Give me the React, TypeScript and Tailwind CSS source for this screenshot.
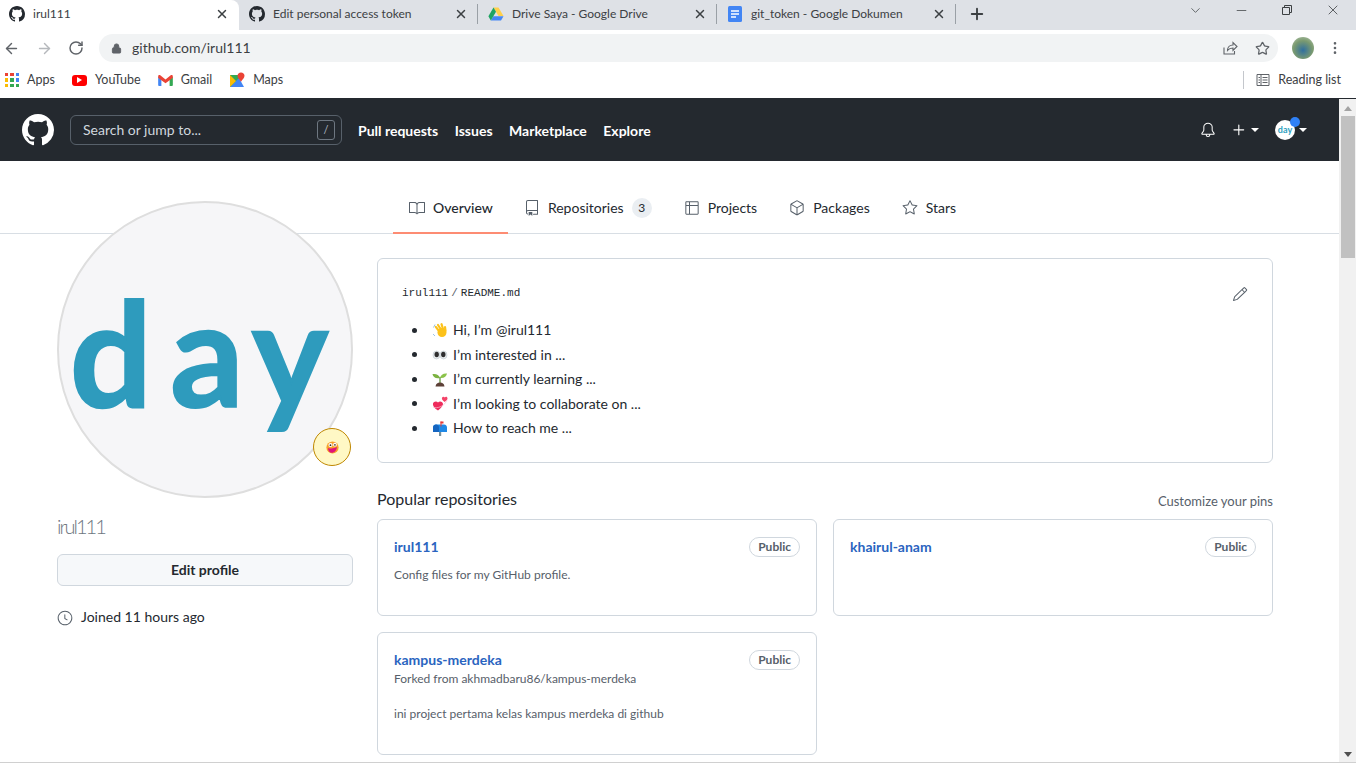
import { GoBook, GoRepo, GoTable, GoPackage, GoStar, GoBell, GoPencil, GoClock, GoPlus } from 'react-icons/go';
import { ArrowLeft, ArrowRight, RotateCw, Lock, Star, X, Plus, Minus, ChevronDown, MoreVertical } from 'lucide-react';

const octocat =
  'M8 0C3.58 0 0 3.58 0 8c0 3.54 2.29 6.53 5.47 7.59.4.07.55-.17.55-.38 0-.19-.01-.82-.01-1.49-2.01.37-2.53-.49-2.69-.94-.09-.23-.48-.94-.82-1.13-.28-.15-.68-.52-.01-.53.63-.01 1.08.58 1.23.82.72 1.21 1.87.87 2.33.66.07-.52.28-.87.51-1.07-1.78-.2-3.64-.89-3.64-3.95 0-.87.31-1.59.82-2.15-.08-.2-.36-1.02.08-2.12 0 0 .67-.21 2.2.82.64-.18 1.32-.27 2-.27.68 0 1.36.09 2 .27 1.53-1.04 2.2-.82 2.2-.82.44 1.1.16 1.92.08 2.12.51.56.82 1.27.82 2.15 0 3.07-1.87 3.75-3.65 3.95.29.25.54.73.54 1.48 0 1.07-.01 1.93-.01 2.2 0 .21.15.46.55.38A8.013 8.013 0 0016 8c0-4.42-3.58-8-8-8z';

function GithubMark({ className }: { className: string }) {
  return (
    <svg viewBox="0 0 16 16" className={className} fill="currentColor">
      <path d={octocat} />
    </svg>
  );
}

function DriveIcon() {
  return (
    <svg viewBox="0 0 16 16" className="w-4 h-4 shrink-0">
      <path d="M5.5 1.5h5l5 8.5h-5z" fill="#ffd04b" />
      <path d="M5.3 10.2h10.2L13 14.5H2.8z" fill="#4687f4" />
      <path d="M5.5 1.5 8 5.8 2.8 14.5.4 10.2z" fill="#1fa463" />
    </svg>
  );
}

function DocsIcon() {
  return (
    <svg viewBox="0 0 16 16" className="w-4 h-4 shrink-0">
      <rect x="1" y="0" width="14" height="16" rx="1.5" fill="#4285f4" />
      <path d="M4 5h8M4 8h8M4 11h5" stroke="#fff" strokeWidth="1.3" />
    </svg>
  );
}

function BrowserTab({ title, icon, active, divider }: { title: string; icon: React.ReactNode; active?: boolean; divider?: boolean }) {
  return (
    <>
      <div
        className={`flex items-center h-[30px] shrink-0 gap-2 pb-[3px] ${
          active ? 'w-[239px] bg-white rounded-tr-lg pl-[9px] pr-[10px]' : 'w-[238px] pl-[10px] pr-[9px]'
        }`}
      >
        {icon}
        <span className="flex-1 text-[12px] text-[#3c4043] truncate">{title}</span>
        <X className="w-[14px] h-[14px] text-[#3c4043]" strokeWidth={2.5} />
      </div>
      {divider && <div className="w-px h-5 bg-[#9aa0a6] shrink-0 -mt-[3px]" />}
    </>
  );
}

function AppsIcon() {
  const colors = ['#ea4335', '#ea4335', '#4285f4', '#fbbc04', '#34a853', '#4285f4', '#fbbc04', '#34a853', '#34a853'];
  return (
    <div className="grid grid-cols-3 gap-[2px] w-[14px] h-[14px]">
      {colors.map((c, i) => (
        <span key={i} style={{ backgroundColor: c }} />
      ))}
    </div>
  );
}

function Bookmark({ icon, label }: { icon: React.ReactNode; label: string }) {
  return (
    <div className="flex items-center gap-2 text-[12.5px] text-[#3c4043]">
      {icon}
      <span>{label}</span>
    </div>
  );
}

function ProfileTab({ icon, label, count, active }: { icon: React.ReactNode; label: string; count?: number; active?: boolean }) {
  return (
    <div
      className={`flex items-center gap-2 h-[50px] pl-4 border-b-2 -mb-px text-[#24292f] ${
        active ? 'pr-[15px] border-[#fd8c73]' : 'pr-4 border-transparent'
      }`}
    >
      <span className="text-[#57606a] text-[16px]">{icon}</span>
      <span className={`text-[14px] -translate-y-px ${active ? 'font-medium' : ''}`}>{label}</span>
      {count !== undefined && (
        <span className="w-[20px] h-[20px] rounded-full bg-[#eaeef2] text-[12px] flex items-center justify-center">
          {count}
        </span>
      )}
    </div>
  );
}

function RepoCard({ name, forked, description, tall }: { name: string; forked?: string; description?: string; tall?: boolean }) {
  return (
    <div className={`border border-[#d0d7de] rounded-md px-4 pt-[16px] bg-white ${tall ? 'h-[123px]' : 'h-[97px]'}`}>
      <div className="flex items-center justify-between h-[20px]">
        <span className="text-[14px] font-bold text-[#2a64c0]">{name}</span>
        <span className="mt-[2px] border border-[#d0d7de] rounded-full px-[8px] h-[20px] flex items-center text-[12px] font-bold text-[#57606a]">
          Public
        </span>
      </div>
      {forked && <p className="text-[12px] text-[#57606a] mt-[1px]">{forked}</p>}
      {description && <p className={`text-[12px] text-[#57606a] ${forked ? 'mt-[17px]' : 'mt-[10px]'}`}>{description}</p>}
    </div>
  );
}

function Wave() {
  return (
    <svg viewBox="0 0 16 16" className="w-4 h-4 shrink-0">
      <circle cx="10" cy="10.500" r="4.500" fill="#fcc21b" />
      <path d="M7 9 3.800 4.800M9 7.500 6 3M11 7l-1.500-4.800M13.500 9 13 5" stroke="#fcc21b" strokeWidth="2.200" strokeLinecap="round" />
      <path d="M1.500 5.500 3 2.500M1 12l2 2" stroke="#9cc4e8" strokeWidth="1" />
    </svg>
  );
}

function Eyes() {
  return (
    <svg viewBox="0 0 16 16" className="w-4 h-4 shrink-0">
      <ellipse cx="4.500" cy="9" rx="3.500" ry="4" fill="#eceff1" stroke="#b0bec5" strokeWidth=".5" />
      <ellipse cx="11.500" cy="9" rx="3.500" ry="4" fill="#eceff1" stroke="#b0bec5" strokeWidth=".5" />
      <ellipse cx="4.700" cy="8.500" rx="2.200" ry="2.800" fill="#2f2f2f" />
      <ellipse cx="11.300" cy="8.500" rx="2.200" ry="2.800" fill="#2f2f2f" />
    </svg>
  );
}

function Seedling() {
  return (
    <svg viewBox="0 0 16 16" className="w-4 h-4 shrink-0">
      <path d="M8 7C7 3.500 4 2.500.5 3c.5 3 3 5 7.500 4z" fill="#7cb342" />
      <path d="M8 7c.5-3 3.500-5 7-4.500-.5 3-3 5-7 4.500z" fill="#8bc34a" />
      <path d="M7.400 6.500h1.200V12H7.400z" fill="#558b2f" />
      <path d="M3.500 15.500c.5-3 2-4 4.500-4s4 1 4.500 4z" fill="#5d4037" />
    </svg>
  );
}

function Hearts() {
  return (
    <svg viewBox="0 0 16 16" className="w-4 h-4 shrink-0">
      <path d="M6 15.500C2 13 .5 10.500 1 8.500c.5-2 3.500-3 5-1 1.500-2 5-1 5 1.500 0 2-2 4-5 6.500z" fill="#ee2c5c" />
      <path d="M12.500 7C10.500 5.500 9.500 4 10 2.800c.4-1.200 2-1.500 2.800-.4 1-1.100 2.700-.5 2.700 1 0 1-1 2.200-3 3.600z" fill="#f44369" />
      <path d="M1 12c2 1 5 1 8-.5s5-4 6-6.500" fill="none" stroke="#f8bbd0" strokeWidth=".7" />
    </svg>
  );
}

function Mailbox() {
  return (
    <svg viewBox="0 0 16 16" className="w-4 h-4 shrink-0">
      <rect x="7" y="10" width="2.200" height="6" fill="#78909c" />
      <path d="M1 7.500C1 5.500 2.500 4.500 4 4.500h8c2 0 3 1.500 3 3V12H1z" fill="#1e88e5" />
      <path d="M1 7.500c0-2 1.300-3 3-3s3 1 3 3V12H1z" fill="#1565c0" />
      <rect x="8.500" y="1.500" width="1" height="5" fill="#e53935" />
      <rect x="8.500" y="1.500" width="3" height="2" fill="#e53935" />
    </svg>
  );
}

function ReadmeItem({ icon, text }: { icon: React.ReactNode; text: string }) {
  return (
    <li className="flex items-center h-[24.5px] relative">
      <span className="absolute left-[-20px] top-[10px] w-[5px] h-[5px] rounded-full bg-[#24292f]" />
      {icon}
      <span className="ml-[5px]">{text}</span>
    </li>
  );
}

function TongueEmoji() {
  return (
    <svg viewBox="0 0 16 16" className="w-[13px] h-[13px]">
      <circle cx="8" cy="8" r="7.5" fill="#f7a02b" />
      <circle cx="5.500" cy="5" r="2.500" fill="#fff" />
      <circle cx="11" cy="4.500" r="2.300" fill="#fff" />
      <circle cx="5.500" cy="5.200" r="1.100" fill="#3a2a20" />
      <circle cx="11" cy="4.800" r="1" fill="#3a2a20" />
      <path d="M2.500 8.500c3 1 7 1 11-1-.5 5-4 7.500-7 7-2.500-.5-4-3-4-6z" fill="#e0137a" />
    </svg>
  );
}

export default function App() {
  return (
    <div
      className="h-[763px] w-[1356px] overflow-hidden bg-white flex flex-col"
      style={{ fontFamily: 'Lato, "Noto Sans", "Liberation Sans", sans-serif' }}
    >
      {/* Browser tabs */}
      <div className="h-[30px] bg-[#dee1e6] flex items-center shrink-0">
        <BrowserTab active title="irul111" icon={<GithubMark className="w-4 h-4 text-[#24292f] shrink-0" />} />
        <BrowserTab divider title="Edit personal access token" icon={<GithubMark className="w-4 h-4 text-[#24292f] shrink-0" />} />
        <BrowserTab divider title="Drive Saya - Google Drive" icon={<DriveIcon />} />
        <BrowserTab divider title="git_token - Google Dokumen" icon={<DocsIcon />} />
        <Plus className="w-[18px] h-[18px] text-[#3c4043] ml-[12px] -mt-[3px]" strokeWidth={2.5} />
        <div className="flex-1" />
        <div className="flex items-center -mt-[10px] text-[#3c4043]">
          <span className="w-[46px] flex justify-center">
            <ChevronDown className="w-[15px] h-[15px]" strokeWidth={1.2} />
          </span>
          <span className="w-[46px] flex justify-center">
            <Minus className="w-[15px] h-[15px]" strokeWidth={1.2} />
          </span>
          <span className="w-[46px] flex justify-center">
            <svg viewBox="0 0 12 12" className="w-[12px] h-[12px]" fill="none" stroke="currentColor">
              <path d="M1.5 3.5h7v7h-7zM3.5 3.500v-2h7v7h-2" />
            </svg>
          </span>
          <span className="w-[46px] flex justify-center">
            <X className="w-[16px] h-[16px]" strokeWidth={1.2} />
          </span>
        </div>
      </div>

      {/* Address bar */}
      <div className="h-[36px] bg-white flex items-center shrink-0 pl-[3px]">
        <ArrowLeft className="w-[17px] h-[17px] text-[#5f6368]" />
        <ArrowRight className="w-[17px] h-[17px] text-[#b5b8bc] ml-[16px]" />
        <RotateCw className="w-[16px] h-[16px] text-[#5f6368] ml-[15px]" strokeWidth={2.2} />
        <div className="ml-[15px] h-[28px] w-[1179px] rounded-full bg-[#f1f3f4] flex items-center pl-[12px] pr-[8px]">
          <Lock className="w-[11px] h-[11px] text-[#5f6368]" fill="#5f6368" />
          <span className="ml-[10px] text-[14px] text-[#3c4043] -translate-y-px">github.com/irul111</span>
          <div className="flex-1" />
          <svg viewBox="0 0 16 16" className="w-[16px] h-[16px]" fill="none" stroke="#5f6368" strokeWidth="1.1">
            <path d="M2 7.500V14h10.500v-3" />
            <path d="M5.500 10.500C5.500 7 8 5 11 5V2.500l4 4-4 4V8C8.500 8 6.800 8.800 5.500 10.500z" />
          </svg>
          <Star className="w-[15px] h-[15px] text-[#5f6368] ml-[17px]" />
        </div>
        <div className="ml-[14px] w-[22px] h-[22px] rounded-full bg-[radial-gradient(circle_at_50%_60%,#2f6f9f,#7a9a70_55%,#b8c8b0)]" />
        <MoreVertical className="w-[16px] h-[16px] text-[#5f6368] ml-[13px]" />
      </div>

      {/* Bookmarks */}
      <div className="h-[32px] bg-white flex items-center shrink-0 pl-[5px] pr-[15px] pb-[4px] gap-[17px]">
        <Bookmark icon={<AppsIcon />} label="Apps" />
        <Bookmark
          icon={
            <span className="w-[15px] h-[11px] rounded-[3px] bg-[#f00] flex items-center justify-center">
              <span className="w-0 h-0 border-y-[3px] border-y-transparent border-l-[5px] border-l-white" />
            </span>
          }
          label="YouTube"
        />
        <Bookmark
          icon={
            <svg viewBox="0 0 16 12" className="w-[15px] h-[11px]">
              <path d="M0 2v9a1 1 0 0 0 1 1h2.500V5z" fill="#4285f4" />
              <path d="M16 2v9a1 1 0 0 1-1 1h-2.500V5z" fill="#34a853" />
              <path d="M0 1.500C0 .3 1.300-.4 2.300.4L8 5 13.700.4c1-.8 2.300-.1 2.300 1.100V3l-3.500 2.600L8 9 3.500 5.600 0 3z" fill="#ea4335" />
            </svg>
          }
          label="Gmail"
        />
        <Bookmark
          icon={
            <svg viewBox="0 0 16 16" className="w-4 h-4">
              <path d="M1 3h9v12H1z" fill="#34a853" />
              <path d="M1 15 10 6l5 9z" fill="#4285f4" />
              <path d="M1 3l6 6-6 6z" fill="#fbbc04" />
              <path d="M12 .5c2 0 3.500 1.500 3.500 3.300 0 2-2 3.700-3.500 6-1.500-2.300-3.500-4-3.500-6C8.500 2 10 .5 12 .5z" fill="#ea4335" />
            </svg>
          }
          label="Maps"
        />
        <div className="flex-1" />
        <div className="w-px h-[18px] bg-[#c4c7cc] -mr-[5px]" />
        <Bookmark
          icon={
            <svg viewBox="0 0 14 14" className="w-[14px] h-[14px]" fill="none" stroke="#5f6368">
              <path d="M1 1.500h12v11H1zM5 1.500v11M6.500 4.500h5M6.500 7h5M6.500 9.500h5M2.500 4.500h1.500M2.500 7h1.500M2.500 9.500h1.500" />
            </svg>
          }
          label="Reading list"
        />
      </div>
      <div className="h-px bg-[#24292f] shrink-0" />

      {/* Page + scrollbar */}
      <div className="flex-1 flex min-h-0">
        <div className="flex-1 min-w-0 overflow-hidden">
          {/* GitHub header */}
          <header className="h-[62px] bg-[#24292f] flex items-center pl-[22px] pr-[32px] text-white">
            <GithubMark className="w-8 h-8 shrink-0" />
            <div className="ml-4 w-[272px] h-[30px] rounded-md border border-[#57606a] flex items-center pl-3 pr-[6px]">
              <span className="text-[14px] text-[#d0d7de] flex-1 -translate-y-px">Search or jump to...</span>
              <span className="w-[18px] h-[20px] border border-[#6e7781] rounded-[3px] text-[11px] text-[#afb8c1] flex items-center justify-center">/</span>
            </div>
            <nav className="ml-4 flex items-center gap-[16.5px] text-[14px] font-bold">
              <span>Pull requests</span>
              <span>Issues</span>
              <span>Marketplace</span>
              <span>Explore</span>
            </nav>
            <div className="flex-1" />
            <GoBell className="w-4 h-4" />
            <GoPlus className="w-[18px] h-[18px] ml-[14px]" />
            <span className="ml-[3px] w-0 h-0 border-x-[4px] border-x-transparent border-t-[4px] border-t-white" />
            <div className="relative ml-[16px] w-5 h-5 rounded-full bg-white flex items-center justify-center text-[9px] font-bold text-[#2f9fc0]">
              day
              <span className="absolute -top-[3px] -right-[5px] w-[10px] h-[10px] rounded-full bg-[#2f81f7]" />
            </div>
            <span className="ml-[4px] w-0 h-0 border-x-[4px] border-x-transparent border-t-[4px] border-t-white" />
          </header>

          {/* Profile tabs */}
          <div className="h-[73px] border-b border-[#d8dee4] flex items-end pl-[393px]">
            <ProfileTab active icon={<GoBook />} label="Overview" />
            <ProfileTab icon={<GoRepo />} label="Repositories" count={3} />
            <ProfileTab icon={<GoTable />} label="Projects" />
            <ProfileTab icon={<GoPackage />} label="Packages" />
            <ProfileTab icon={<GoStar />} label="Stars" />
          </div>

          <div className="flex pl-[57px]">
            {/* Sidebar */}
            <aside className="w-[296px] shrink-0 -mt-[33px] relative z-10">
              <div className="relative w-[296px] h-[297px]">
                <div className="w-full h-full rounded-full bg-[#f6f6f8] border-2 border-[#dedede] flex items-center justify-center overflow-hidden">
                  <span className="text-[145px] font-bold text-[#2e9bbd] tracking-[10px] -ml-[2px] mt-[4px] [-webkit-text-stroke:2px_#2e9bbd]">
                    <span className="mr-[8px]">d</span>ay
                  </span>
                </div>
                <div className="absolute left-[256px] top-[227px] w-[38px] h-[38px] rounded-full bg-[#fff8c5] border border-[#bf8700] flex items-center justify-center">
                  <TongueEmoji />
                </div>
              </div>
              <div className="mt-[13px] text-[20px] font-light text-[#6e7781] leading-[30px] tracking-[-2px]">irul111</div>
              <button className="mt-[13px] w-full h-[32px] rounded-md border border-[#d0d7de] bg-[#f6f8fa] text-[14px] font-bold text-[#24292f] pb-[2px]">
                Edit profile
              </button>
              <div className="mt-[21px] flex items-center gap-2 text-[14px] text-[#24292f]">
                <GoClock className="w-4 h-4 text-[#57606a]" />
                <span className="-translate-y-px">Joined 11 hours ago</span>
              </div>
            </aside>

            {/* Main column */}
            <main className="ml-6 w-[896px] pt-[24px]">
              <section className="relative h-[205px] border border-[#d0d7de] rounded-md px-6 pt-[26px]">
                <div className="flex gap-[3px] text-[11px] text-[#24292f]" style={{ fontFamily: '"Liberation Mono", monospace' }}>
                  <span>irul111</span>
                  <span className="text-[#57606a]">/</span>
                  <span>README.md</span>
                </div>
                <GoPencil className="absolute top-[27px] right-[24px] w-4 h-4 text-[#57606a]" />
                <ul className="mt-[16px] pl-[30px] text-[14px] text-[#24292f]">
                  <ReadmeItem icon={<Wave />} text="Hi, I’m @irul111" />
                  <ReadmeItem icon={<Eyes />} text="I’m interested in ..." />
                  <ReadmeItem icon={<Seedling />} text="I’m currently learning ..." />
                  <ReadmeItem icon={<Hearts />} text="I’m looking to collaborate on ..." />
                  <ReadmeItem icon={<Mailbox />} text="How to reach me ..." />
                </ul>
              </section>

              <div className="mt-[25px] flex items-baseline justify-between">
                <h2 className="text-[16px] text-[#24292f] -translate-y-px">Popular repositories</h2>
                <span className="text-[13px] text-[#57606a]">Customize your pins</span>
              </div>
              <div className="mt-[7px] grid grid-cols-2 gap-x-4 gap-y-4 items-start">
                <RepoCard name="irul111" description="Config files for my GitHub profile." />
                <RepoCard name="khairul-anam" />
                <RepoCard
                  tall
                  name="kampus-merdeka"
                  forked="Forked from akhmadbaru86/kampus-merdeka"
                  description="ini project pertama kelas kampus merdeka di github"
                />
              </div>
            </main>
          </div>
        </div>

        {/* Scrollbar */}
        <div className="w-[17px] bg-[#f1f1f1] shrink-0 flex flex-col items-center">
          <span className="mt-[7px] w-0 h-0 border-x-[4px] border-x-transparent border-b-[5px] border-b-[#a3a3a3]" />
          <div className="mt-[5px] w-[14px] h-[142px] bg-[#c1c1c1]" />
          <div className="flex-1" />
          <span className="mb-[5px] w-0 h-0 border-x-[4px] border-x-transparent border-t-[5px] border-t-[#505050]" />
        </div>
      </div>
      <div className="h-px bg-[#d0d0d0] shrink-0" />
    </div>
  );
}
